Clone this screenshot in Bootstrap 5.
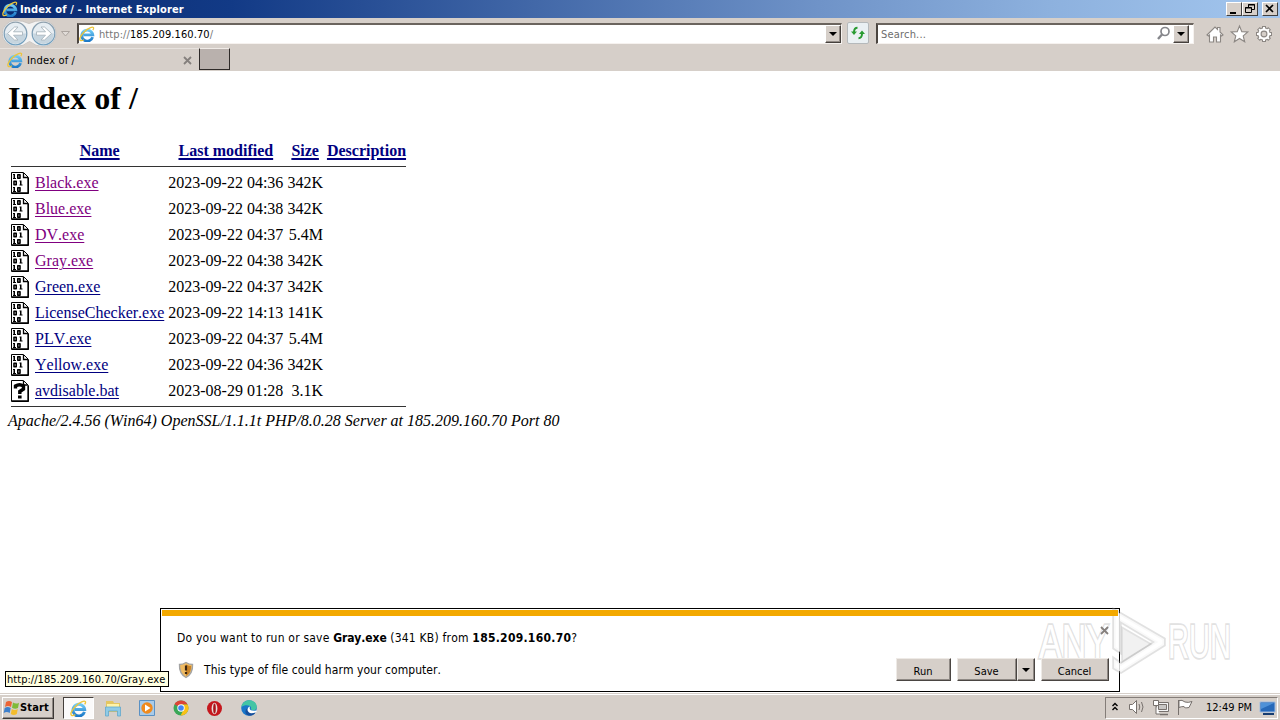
<!DOCTYPE html>
<html lang="en">
<head>
<meta charset="utf-8">
<title>Index of /</title>
<link rel="stylesheet" href="https://cdn.jsdelivr.net/npm/bootstrap@5.3.0/dist/css/bootstrap.min.css">
<style>
:root{--face:#d6cfc9;--ui:"DejaVu Sans Condensed","DejaVu Sans",sans-serif}
body{width:1280px;height:720px;overflow:hidden;background:#fff;color:#000;font:11px/14px var(--ui);font-kerning:none}
svg{display:block;flex:none}
.titlebar{height:18px;padding:0 2px;background:linear-gradient(90deg,#0a2a70 0,#123a86 18%,#6f93c8 64%,#8db1de 82%,#a3c6ee 100%);color:#fff}
.title-text{font-weight:bold;letter-spacing:.15px;margin:2px 0 0 2px}
.sysbtn{width:16px;height:14px;background:var(--face);border:1px solid;border-color:#fff #404040 #404040 #fff;padding:0}
.navstrip{height:30px;background:var(--face);padding-left:2px}
.field{height:21px;background:#fff;border:1px solid;border-color:#6b645e #f6f2ef #f6f2ef #4b4540;border-top-width:2px;border-left-width:2px}
.address{width:765px;margin-left:5px}
.searchbox{width:318px;margin-left:7px;color:#6d6d6d}
.drop{width:16px;height:18px;background:var(--face);border:1px solid;border-color:#fff #45403c #45403c #fff;box-shadow:inset -1px -1px #928b86}
.refresh{width:22px;height:22px;margin-left:5px;background:#eaf0f3;border:1px solid #b5b9bb;border-radius:2px}
.tabstrip{height:23px;background:var(--face)}
.pagetab{width:199px;height:23px;border-top:1px solid #e7e2de;padding:0 7px 0 7px}
.newtab{width:31px;height:22px;background:#b9b1ad;border:1px solid;border-color:#f0ebe7 #2e2a28 #2e2a28 #2e2a28}
.page{height:622px;padding:0 8px;font:16px/18px "Liberation Serif",serif;font-kerning:none}
.page h1{font:bold 32px/37px "Liberation Serif",serif;margin:9px 0 0;height:67px}
.listing{border-collapse:separate;border-spacing:2px;margin-top:-8px}
.listing td,.listing th{padding:1px;height:24px;line-height:18px;vertical-align:middle;white-space:nowrap}
.listing th{height:20px;text-align:center}
.listing .rule{height:5px;padding:2px 1px 0;line-height:0}
.listing .rule span{display:block;height:1px;background:#333}
.listing tfoot .rule{height:4px;padding:1px 1px 0}
.listing tbody td{padding-top:2px;padding-bottom:0}
.listing .namecol{min-width:131px}
.listing a{color:#000080;text-decoration:underline;text-underline-offset:2px;text-decoration-thickness:1px}
.listing th a{text-decoration-thickness:2px}
.listing a.seen{color:#800080}
.sig{font-style:italic;margin-top:2px}
.notice{left:160px;top:608px;width:960px;height:84px;background:#fff;border:1px solid #000;padding:1px;font-size:12px;line-height:16px}
.stripe{height:6px;background:#f3a900}
.ask{letter-spacing:.21px}
.ask b{letter-spacing:-.1px}
.ask b.host{letter-spacing:.28px}
.harm{letter-spacing:.06px;margin-left:10px}
.winbtn{height:23px;background:var(--face);border:1px solid;border-color:#eeeae6 #4a4542 #4a4542 #eeeae6;box-shadow:inset -1px -1px #8f8984;padding:4px 1px 0 0;font-size:11px;line-height:14px;color:#000}
.status-tip{left:5px;top:671px;width:164px;height:16px;background:#ffffe1;border:1px solid #000;padding-left:1px;line-height:15px;letter-spacing:.04px;white-space:nowrap}
.watermark{left:1030px;top:600px;pointer-events:none;overflow:visible}
.taskbar{height:27px;background:var(--face);border-top:1px solid #d6cfc9;box-shadow:inset 0 1px #fff;padding:3px 2px 1px 2px}
.start{width:52px;height:22px;border:1px solid;border-color:#fff #3c3835 #3c3835 #fff;box-shadow:inset -1px -1px #8f8984;font-weight:bold;letter-spacing:.15px}
.running{width:31px;height:22px;margin-left:9px;background:#fbfafa;border:1px solid;border-color:#45403c #fff #fff #45403c}
.tray{width:173px;height:22px;border:1px solid;border-color:#847d78 #fff #fff #847d78;padding-left:4px}
.field-text{margin-top:2px}
.url{letter-spacing:.08px}
.url span{color:#777}
</style>
</head>
<body class="d-flex flex-column">
<svg width="0" height="0" class="position-absolute">
  <defs>
    <linearGradient id="gb" x2="0" y2="1"><stop stop-color="#6fcaf5"/><stop offset="1" stop-color="#1c79c8"/></linearGradient>
    <linearGradient id="gc" x2="0" y2="1"><stop stop-color="#8fa0ad"/><stop offset="1" stop-color="#6f9fc0"/></linearGradient>
    <symbol id="ie" viewBox="0 0 16 16">
      <path d="M13.600 11.200A5.500 5.500 0 1 1 13.800 8.900H4.500" fill="none" stroke="url(#gb)" stroke-width="2.800"/>
      <path d="M13.800 4.200C15.500 1.500 14.500.3 11 1.800 6.500 3.700 2.300 8.500 1.100 11.800.2 14.800 2 15.500 5 13.800" fill="none" stroke="#ecc53c" stroke-width="1.300"/>
    </symbol>
    <symbol id="bin" viewBox="0 0 20 22">
      <path d="M.5.5H12.500L17.500 5.500V21.500H.5z" fill="#fff" stroke="#000"/><path d="M12.500 1V5.500H17M17 6V21H1" fill="none" stroke="#000" stroke-width="1.300"/>
      <path d="M2 2h2v4h1v1H2V6h.5V3H2zM8.500 8.500h2v4h1v1h-3v-1H9v-3h-.5zM2 15h2v4h1v1H2v-1h.5v-3H2z"/>
      <path d="M6.800 2.800h2.200v3.400H6.800zM3 9.300h2.200v3.400H3zM6.800 15.800h2.200v3.400H6.800z" fill="none" stroke="#000" stroke-width="1.600" stroke-linejoin="round"/>
    </symbol>
    <symbol id="unk" viewBox="0 0 20 22">
      <path d="M.5.5H12.500L17.500 5.500V21.500H.5z" fill="#fff" stroke="#000"/><path d="M12.500 1V5H17M17 6V21H1" fill="none" stroke="#000" stroke-width="1.300"/>
      <path d="M4.500 8.500V6q4-2.500 8 0V9L8.800 11.500V14" fill="none" stroke="#000" stroke-width="3.400"/><path d="M7 15.500h3.600v3H7z"/>
    </symbol>
    <symbol id="arrow" viewBox="0 0 10 6"><path d="M1 1h8L5 5z"/></symbol>
    <symbol id="cross" viewBox="0 0 9 9"><path d="M1 1l7 7M8 1l-7 7" stroke="#85807d" stroke-width="1.800"/></symbol>
  </defs>
</svg>

<header class="titlebar d-flex align-items-center">
  <svg width="16" height="16"><use href="#ie"/></svg>
  <span class="title-text">Index of / - Internet Explorer</span>
  <div class="d-flex ms-auto">
    <span class="sysbtn"><svg width="14" height="12"><path d="M3 9h6v2H3z"/></svg></span>
    <span class="sysbtn"><svg width="14" height="12"><path d="M5.500 5V1.500h6v5H9M5 2h7M2.500 4.500h6v5h-6zM2 5h7" fill="none" stroke="#000"/></svg></span>
    <span class="sysbtn ms-1"><svg width="14" height="12"><path d="M3 2l7 7M10 2l-7 7" stroke="#000" stroke-width="1.700"/></svg></span>
  </div>
</header>

<nav class="navstrip d-flex align-items-center">
  <svg width="70" height="30" viewBox="2 18 70 30">
    <path d="M15 20.500q8 0 14 3 6-3 14-3a13 13 0 0 1 .5 26q-8 0-14-5-6 5-14 5a13 13 0 0 1-.5-26z" fill="#f3f3f3" stroke="#c9c5c2"/>
    <g fill="#e6edf2" stroke="url(#gc)" stroke-width="1.300"><circle cx="15.500" cy="33.500" r="11.300"/><circle cx="43.500" cy="33.500" r="11.300"/></g>
    <path d="M5 33.500a10.500 10.500 0 0 0 21 0zM33 33.500a10.500 10.500 0 0 0 21 0z" fill="#c6d5df"/>
    <path d="M7.500 33.500l7-6.500h3.500l-4.500 4.800h9v3.400h-9l4.500 4.800h-3.500zM51.500 33.500l-7-6.500h-3.500l4.500 4.800h-9v3.400h9l-4.500 4.800h3.500z" fill="#fff" stroke="#a9b5bd" stroke-width=".9"/>
    <path d="M61.500 31.500h8l-4 4.500z" fill="#e1dcd8" stroke="#aca5a0"/>
  </svg>
  <div class="field address d-flex align-items-center">
    <svg width="16" height="16"><use href="#ie"/></svg>
    <span class="ms-1 url field-text"><span>http://</span>185.209.160.70<span>/</span></span>
    <span class="drop ms-auto d-flex align-items-center justify-content-center"><svg width="10" height="6"><use href="#arrow"/></svg></span>
  </div>
  <span class="refresh"><svg width="20" height="20"><path d="M3 8.500h6L6 12zM11 11h6L14 7.500z" fill="#299b32"/><path d="M9.500 4.800q-3.300 0-3.500 4.200M10.500 15.200q3.300 0 3.500-4.200" fill="none" stroke="#299b32" stroke-width="2"/></svg></span>
  <div class="field searchbox d-flex align-items-center">
    <span class="field-text" style="margin-left:3px;letter-spacing:.15px">Search...</span>
    <svg class="ms-auto" width="15" height="15"><circle cx="9" cy="5.500" r="4" fill="none" stroke="#85868b" stroke-width="1.700"/><path d="M6 8.500l-4 4.500" stroke="#85868b" stroke-width="2.400"/></svg>
    <span class="drop d-flex align-items-center justify-content-center" style="margin:0 4px 0 2px"><svg width="10" height="6"><use href="#arrow"/></svg></span>
  </div>
  <svg class="ms-auto" style="margin-right:4px" width="74" height="28" viewBox="1202 20 74 28" fill="#fff" stroke="#8c8783" stroke-width="1.100">
    <path d="M1207 36l8-8 2.500 2.500v-2h2.500v4.500l3 3-1.500 1-1-1v7h-4v-5h-3v5h-4v-7l-1 1z"/>
    <path d="M1239.500 27l2.300 5.600 6 .4-4.600 3.900 1.500 5.900-5.200-3.300-5.200 3.300 1.500-5.900-4.600-3.900 6-.4z"/>
    <g fill="none"><path d="M1264 27v16M1256 35h16M1258.400 29.400l11.200 11.200M1269.600 29.400l-11.200 11.200" stroke-width="4"/><circle cx="1264" cy="35" r="4.500" stroke-width="4.600"/>
    <g stroke="#fff"><path d="M1264 28v14M1257 35h14M1259.100 30.100l9.800 9.800M1268.900 30.100l-9.800 9.800" stroke-width="2"/><circle cx="1264" cy="35" r="4.500" stroke-width="2.400"/></g></g><circle cx="1264" cy="35" r="2.900" fill="#d6cfc9"/>
  </svg>
</nav>

<div class="tabstrip d-flex">
  <div class="pagetab d-flex align-items-center">
    <svg width="16" height="16"><use href="#ie"/></svg>
    <span class="ms-1 field-text" style="letter-spacing:.15px">Index of /</span>
    <svg class="ms-auto" width="9" height="9"><use href="#cross"/></svg>
  </div>
  <div class="newtab"></div>
</div>

<main class="page">
  <h1>Index of /</h1>
  <table class="listing">
    <thead>
      <tr><th></th><th class="namecol"><a href="#">Name</a></th><th><a href="#">Last modified</a></th><th><a href="#">Size</a></th><th><a href="#">Description</a></th></tr>
      <tr><td class="rule" colspan="5"><span></span></td></tr>
    </thead>
    <tbody id="files"></tbody>
    <tfoot><tr><td class="rule" colspan="5"><span></span></td></tr></tfoot>
  </table>
  <div class="sig">Apache/2.4.56 (Win64) OpenSSL/1.1.1t PHP/8.0.28 Server at 185.209.160.70 Port 80</div>
</main>

<section class="notice position-absolute">
  <div class="stripe position-relative z-1"></div>
  <div class="d-flex justify-content-between" style="padding:14px 9px 0 15px">
    <span class="ask">Do you want to run or save <b>Gray.exe</b> (341 KB) from <b class="host">185.209.160.70</b>?</span>
    <svg class="position-relative z-1" width="9" height="9" style="margin-top:-4px"><use href="#cross"/></svg>
  </div>
  <div class="d-flex align-items-center" style="padding:12px 9px 0 16px">
    <svg width="16" height="18" viewBox="0 0 16 18"><path d="M8 1.500q3 2 6.500 2 .5 9-6.500 13Q1 12.500 1.500 3.500q3.500 0 6.500-2z" fill="#f0bb62" stroke="#a3a3a3" stroke-width="1.400"/><path d="M8 3.500q3 1.500 5 1.500Q13.500 12 8 15z" fill="#c98327"/><path d="M8 4.500v5M8 11v2" stroke="#3a2510" stroke-width="2.200"/></svg>
    <span class="harm">This type of file could harm your computer.</span>
    <div class="d-flex ms-auto position-relative z-1">
      <button class="winbtn" style="width:55px">Run</button>
      <button class="winbtn" style="width:60px;margin-left:6px">Save</button>
      <button class="winbtn d-flex align-items-center justify-content-center p-0" style="width:18px"><svg width="10" height="6"><use href="#arrow"/></svg></button>
      <button class="winbtn" style="width:68px;margin-left:6px">Cancel</button>
    </div>
  </div>
</section>

<div class="status-tip position-absolute">http://185.209.160.70/Gray.exe</div>

<svg class="watermark position-absolute" width="230" height="80" viewBox="1030 600 230 80">
  <g font-family="Liberation Sans Narrow, Liberation Sans, sans-serif" font-size="49" fill="#fff" stroke="#9a9a9a" stroke-opacity=".3" stroke-width="3.500" paint-order="stroke">
    <text x="1039" y="657.500" textLength="70" lengthAdjust="spacingAndGlyphs">ANY</text>
    <text x="1168" y="657.500" textLength="63" lengthAdjust="spacingAndGlyphs">RUN</text>
    <path fill-rule="evenodd" d="M1114 622v-12l50 29v6l-43 27-7-4v-9l7 5 34-22-35-21v31l-6-4z" fill-opacity=".8"/>
    <path d="M1123 629l26 15-26 16z" fill="#f1f1f1"/>
  </g>
</svg>

<footer class="taskbar d-flex">
  <div class="start d-flex align-items-center"><svg width="17" height="18" viewBox="0 0 17 18"><path d="M3 3q3-2 6 0L8 8Q5 6 2 8z" fill="#ec6436"/><path d="M10 3.500q3 2 6 .2L15 9q-3 1.500-6-.3z" fill="#7fba39"/><path d="M1.700 9q3-1.800 6 0l-1 5q-3-1.800-6 0z" fill="#3e80cc"/><path d="M8.800 10q3 1.800 6 0l-1 5q-3 1.800-6 0z" fill="#f4bd2e"/></svg><span>Start</span></div>
  <div class="running d-flex align-items-center justify-content-center"><svg width="17" height="17"><use href="#ie"/></svg></div>
  <svg width="170" height="24" viewBox="94 696 170 24">
    <path d="M106 700h7l1 2h6v9h-14z" fill="#e4c661"/><path d="M107 703h12v4h-12z" fill="#fff3a8"/><path d="M105.500 706h15v9h-3v-5h-9v5h-3z" fill="#8fcbe6" stroke="#62a8cd" stroke-width=".8"/>
    <path d="M139.500 699.500h15v15h-15z" fill="#a9cbe9" stroke="#5a91c4"/><circle cx="147" cy="707" r="5.700" fill="#f08a1d"/><path d="M145 703.500v7l5.500-3.500z" fill="#fff"/>
    <circle cx="181" cy="707" r="7.500" fill="#3aa757"/><path d="M181 707l-6.500-3.800A7.500 7.500 0 0 1 187.600 703.500H181z" fill="#dc4437"/><path d="M181 703.500h6.600a7.500 7.500 0 0 1-7 11L184 708z" fill="#fbc116"/><circle cx="181" cy="707" r="3.700" fill="#fff"/><circle cx="181" cy="707" r="2.800" fill="#4285f4"/>
    <circle cx="214.500" cy="707.500" r="7.500" fill="#c5171d"/><ellipse cx="214.500" cy="707.500" rx="2.900" ry="5.700" fill="#e9dfdc"/><ellipse cx="214.500" cy="707.500" rx="1.300" ry="5" fill="#a71318"/>
    <circle cx="249" cy="707" r="7.800" fill="#1976c9"/><path d="M241.500 706c1-9 15-9 15.300 0 0 4-5 4-6 2 2-4-6-5-9.300-2z" fill="#43c5a5"/><path d="M248 707c-1 4 4 6 7.500 4.500-1.500 3-5 3.500-7 3-4-1-4-6-.5-7.500z" fill="#164f9c"/><path d="M250 705.500q-2 5 6.700 4l-.2 1.500q-8 3-9-2 0-3 2.500-3.500z" fill="#fff"/>
  </svg>
  <div class="tray ms-auto d-flex align-items-center">
    <svg width="84" height="20" viewBox="1110 698 84 20" fill="none" stroke="#000">
      <path d="M1112.500 706l2.500-2.500 2.500 2.500M1112.500 710l2.500-2.500 2.500 2.500" stroke-width="1.400"/>
      <g stroke="#77716d"><path d="M1129.500 704.500h3l4-4v13l-4-4h-3z" fill="#fff"/><path d="M1139 704q1.500 3 0 6M1141.500 702q3 5 0 10"/>
      <path d="M1156.500 702.500h12v9h-12z" fill="#f4f4f4"/><path d="M1158.500 704.500h8v5h-8z" fill="#c8c6c4"/><path d="M1160 714.500h8" stroke-width="1.500"/><path d="M1153.500 700.500h5v5h-5zM1156 706v8h4" fill="#fff"/>
      <path d="M1178.500 700v15M1179 700.500q3-1 6 1.500 3 1 7-.5l-3 6q-5 1-5-1-3 0-5 1z" fill="#fff"/></g>
    </svg>
    <span style="margin-left:12px">12:49 PM</span>
    <svg class="ms-auto" width="19" height="18"><path d="M2 3h15v10H2z" fill="#2769b9" stroke="#9ebbe0"/><path d="M3 4h13L3 10z" fill="#4e91d8"/><path d="M5 14h11v2H5z" fill="#163c70"/></svg>
  </div>
</footer>

<script>
const files=[["Black.exe","2023-09-22 04:36","342K",1],["Blue.exe","2023-09-22 04:38","342K",1],["DV.exe","2023-09-22 04:37","5.4M",1],["Gray.exe","2023-09-22 04:38","342K",1],["Green.exe","2023-09-22 04:37","342K",0],["LicenseChecker.exe","2023-09-22 14:13","141K",0],["PLV.exe","2023-09-22 04:37","5.4M",0],["Yellow.exe","2023-09-22 04:36","342K",0],["avdisable.bat","2023-08-29 01:28","3.1K",0]];
document.getElementById("files").innerHTML=files.map(([n,d,s,v])=>`<tr><td><svg width="20" height="22"><use href="#${n.endsWith("bat")?"unk":"bin"}"/></svg></td><td><a href="#" class="${v?"seen":""}">${n}</a></td><td class="text-end">${d}</td><td class="text-end">${s}</td><td></td></tr>`).join("");
</script>
<script src="https://cdn.jsdelivr.net/npm/bootstrap@5.3.0/dist/js/bootstrap.bundle.min.js"></script>
</body>
</html>
